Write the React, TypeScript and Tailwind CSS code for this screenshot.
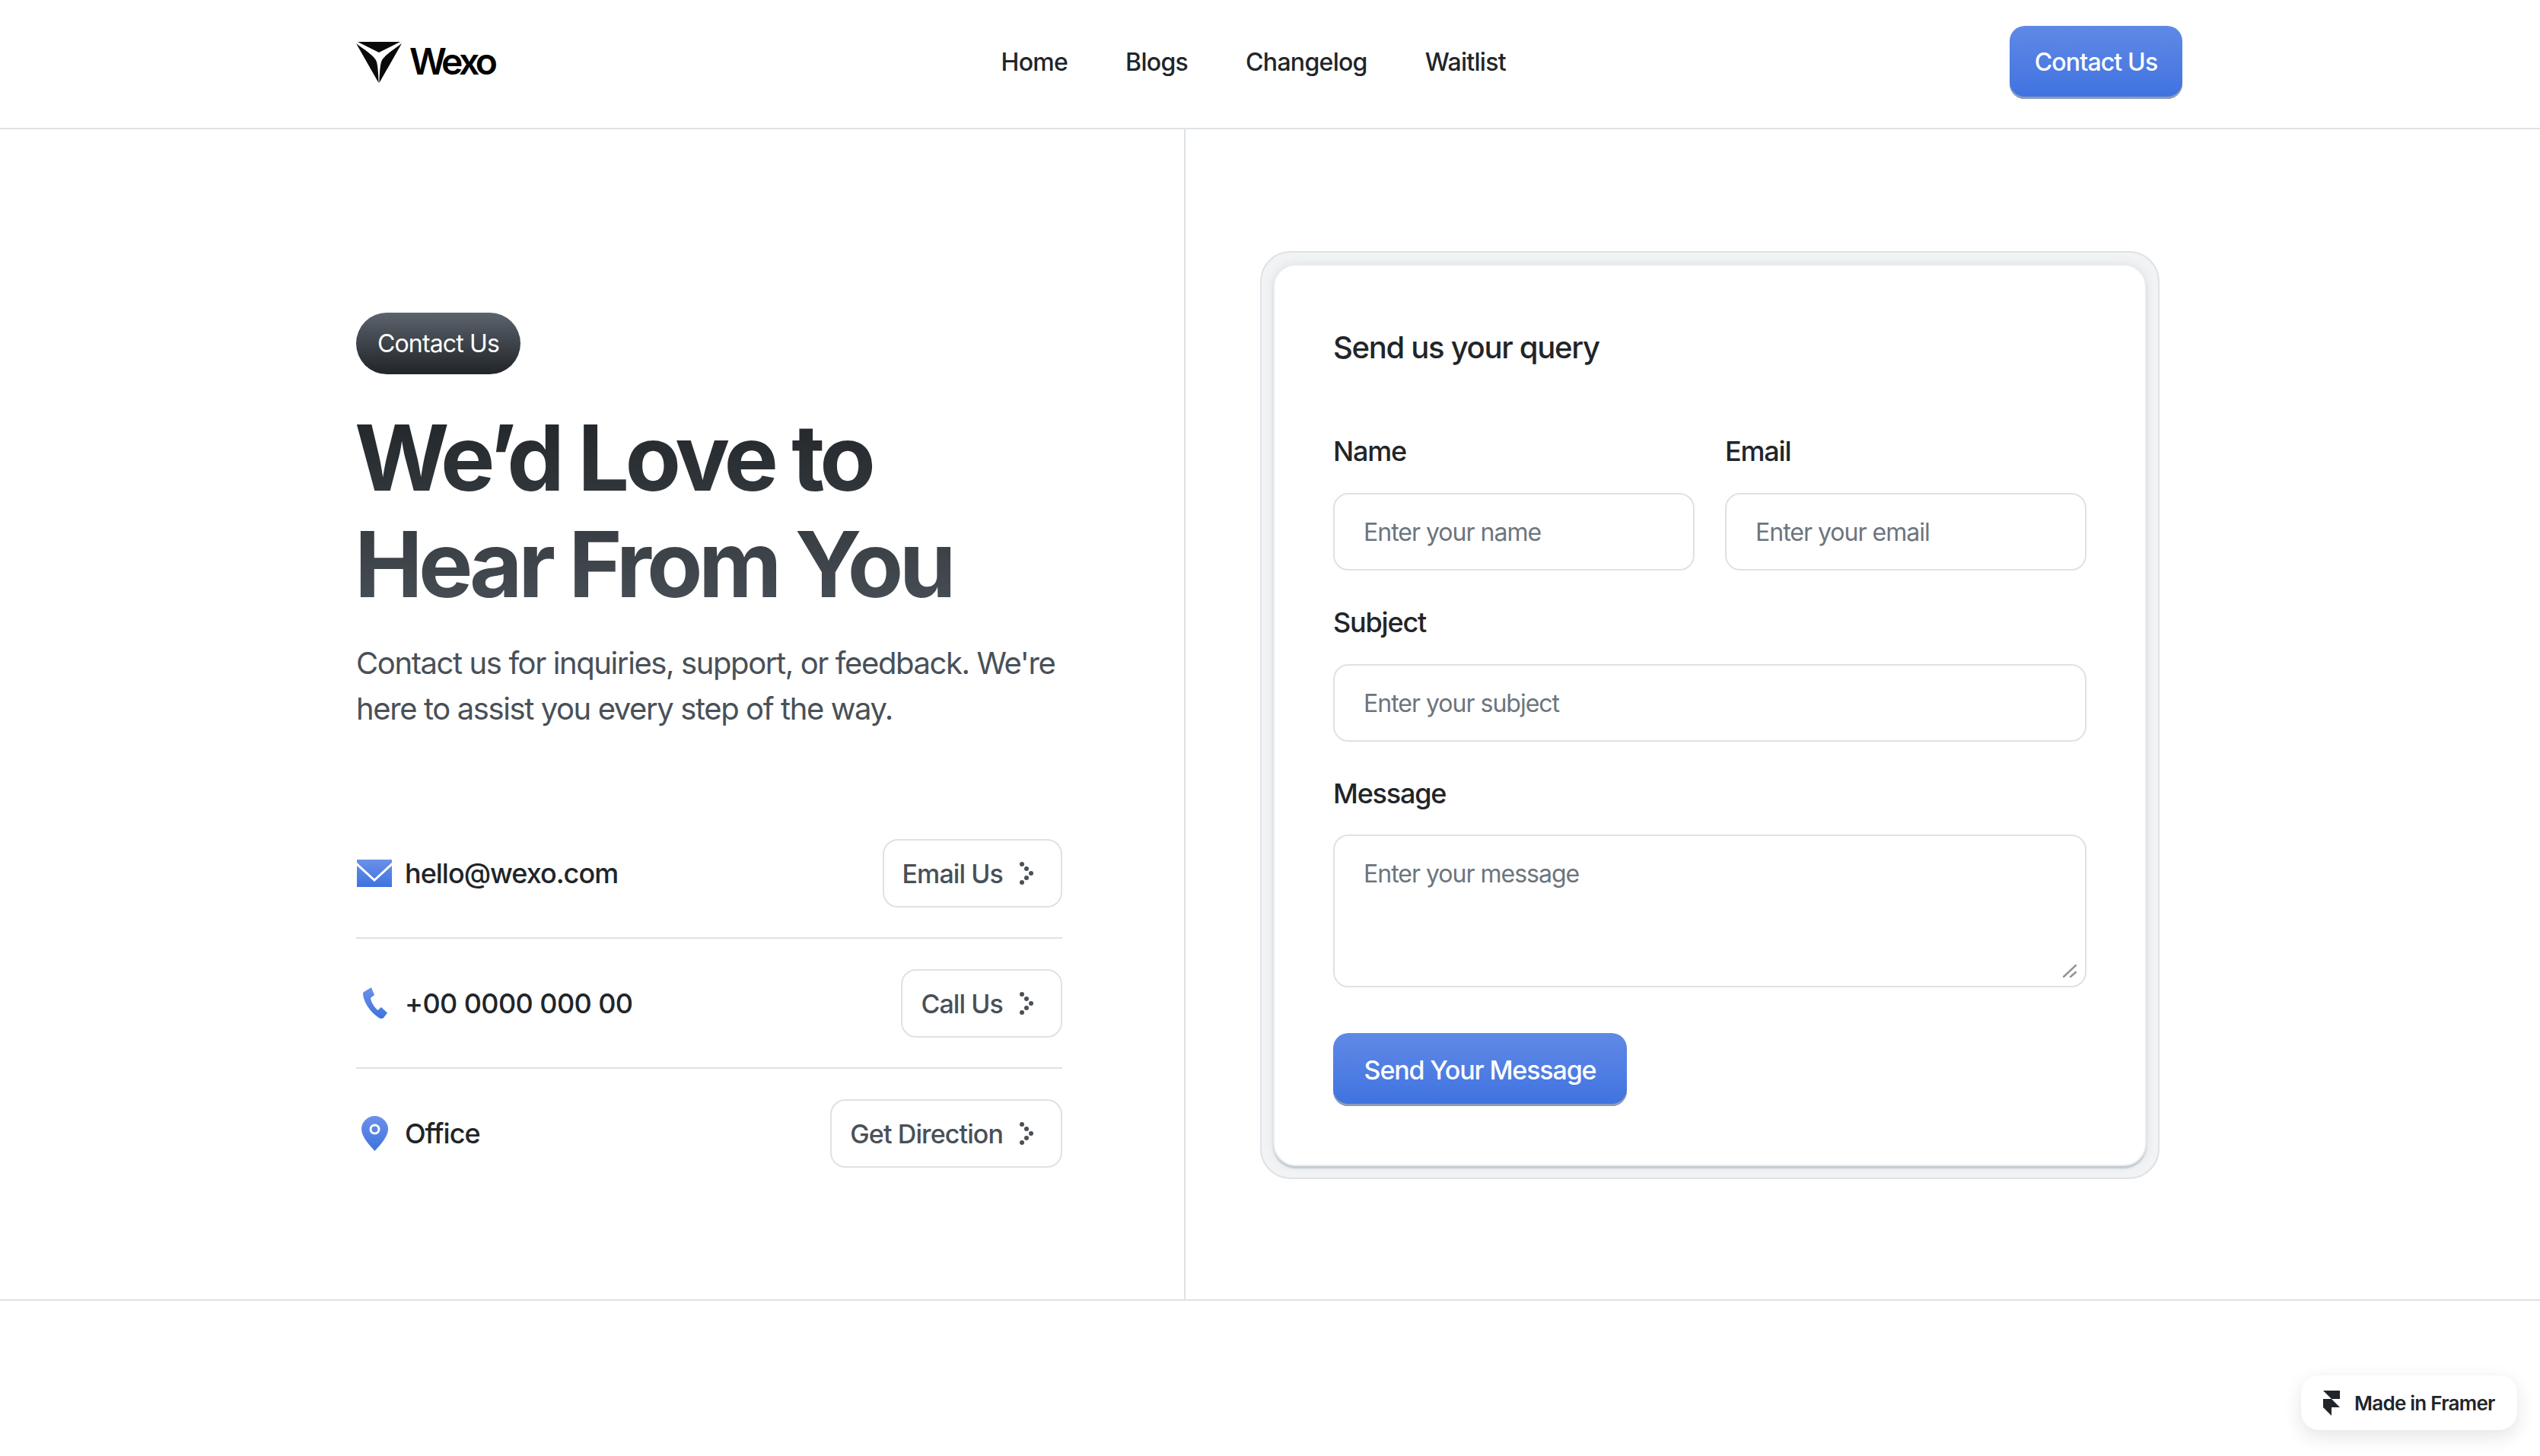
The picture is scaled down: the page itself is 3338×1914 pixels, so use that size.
import * as React from "react";

const navLinks = ["Home", "Blogs", "Changelog", "Waitlist"];

const BlueGradient = ({ id }: { id: string }) => (
  <defs>
    <linearGradient id={id} x1="0" y1="0" x2="0" y2="1">
      <stop offset="0" stopColor="#6b91e8" />
      <stop offset="1" stopColor="#3f72e0" />
    </linearGradient>
  </defs>
);

const WexoLogo = () => (
  <svg width="60" height="54" viewBox="0 0 60 54" className="shrink-0">
    <path d="M2 0H58L30 14Z" fill="#0a0a0a" />
    <path d="M0 2C10 10 21 16 26 24C28 28 29 36 29.6 54Z" fill="#0a0a0a" />
    <path d="M60 2C50 10 39 16 34 24C32 28 31 36 30.4 54Z" fill="#0a0a0a" />
  </svg>
);

const MailIcon = () => (
  <svg width="46" height="36" viewBox="0 0 46 36">
    <BlueGradient id="mail" />
    <rect width="46" height="36" fill="url(#mail)" />
    <path d="M-1 5L23 27L47 5" fill="none" stroke="#fff" strokeWidth="3" />
  </svg>
);

const PhoneIcon = () => (
  <svg width="32" height="42" viewBox="0 0 32 42" className="ml-[2px]">
    <BlueGradient id="phone" />
    <path
      d="M1 6L11 0L15 10L10 14C11 20 15 26 19.5 30L24 26L32 33.5L27 40C26 41 23 41.5 21 40C10 33 1 20 0 9C0 8 0 7 1 6Z"
      fill="url(#phone)"
    />
  </svg>
);

const PinIcon = () => (
  <svg width="35" height="46" viewBox="0 0 35 46">
    <BlueGradient id="pin" />
    <path
      d="M17.5 0C8 0 0 8 0 17C0 27 10 38 17.5 46C25 38 35 27 35 17C35 8 27 0 17.5 0Z"
      fill="url(#pin)"
    />
    <circle cx="17.5" cy="17.5" r="5.5" fill="none" stroke="#fff" strokeWidth="3" />
  </svg>
);

const DotsArrow = () => (
  <svg width="40" height="40" viewBox="0 0 40 40" fill="#495057">
    <circle cx="13" cy="8" r="3" />
    <circle cx="19" cy="14" r="3" />
    <circle cx="25" cy="20" r="3" />
    <circle cx="19" cy="26" r="3" />
    <circle cx="13" cy="32" r="3" />
  </svg>
);

const contactRows = [
  { icon: <MailIcon />, text: "hello@wexo.com", action: "Email Us", tracking: "tracking-[-1px]" },
  { icon: <PhoneIcon />, text: "+00 0000 000 00", action: "Call Us", tracking: "tracking-[-0.6px]" },
  { icon: <PinIcon />, text: "Office", action: "Get Direction", tracking: "tracking-[-1px]" },
];

const inputClass =
  "w-full rounded-[20px] border-2 border-[#dee2e6] bg-white px-[38px] text-[32px] tracking-[-1px] text-[#212529] outline-none placeholder:text-[#6c757d]";

const Field = ({ label, placeholder }: { label: string; placeholder: string }) => (
  <label className="flex min-w-0 flex-1 flex-col gap-[27px]">
    <span className="text-[36px] leading-[56px] font-medium tracking-[-1.2px] text-[#212529]">{label}</span>
    <input placeholder={placeholder} className={`${inputClass} h-[102px]`} />
  </label>
);

export default function App() {
  return (
    <div className="relative min-h-[1914px] bg-white font-[Inter,sans-serif]">
      <header className="h-[170px] border-b-2 border-[#dee2e6]">
        <div className="mx-auto flex h-[168px] w-[2402px] items-center justify-between pr-[2px] pb-[4px]">
          <div className="flex items-center gap-[10px]">
            <WexoLogo />
            <span className="mb-[2px] text-[48px] leading-none font-semibold tracking-[-4.5px] text-black">Wexo</span>
          </div>
          <nav className="ml-[4px] flex items-center gap-[76px]">
            {navLinks.map((link) => (
              <a key={link} className="text-[32px] font-medium tracking-[-0.7px] text-[#212529]">
                {link}
              </a>
            ))}
          </nav>
          <a className="flex h-[96px] w-[227px] items-center justify-center rounded-[20px] bg-linear-to-b from-[#6089e6] to-[#3f72e0] text-[32px] font-medium tracking-[-0.85px] text-white shadow-[inset_0_-3px_0_#8c9cb8]">
            Contact Us
          </a>
        </div>
      </header>

      <main className="flex border-b-2 border-[#dee2e6]">
        <section className="w-[1558px] border-r-2 border-[#dee2e6] pt-[241px] pr-[160px] pb-[170px] pl-[468px]">
          <span className="inline-flex h-[81px] w-[216px] items-center justify-center rounded-full bg-linear-to-b from-[#5c646d] to-[#212529] text-[32px] tracking-[-0.85px] text-white">
            Contact Us
          </span>
          <h1 className="mt-[40px] ml-[-2px] w-fit bg-linear-to-b from-[#212529] to-[#495057] bg-clip-text text-[120px] leading-[140px] font-bold tracking-[-5.6px] text-transparent">
            We’d Love to
            <br />
            Hear From You
          </h1>
          <p className="mt-[30px] text-[40px] leading-[60px] tracking-[-1.4px] text-[#495057]">
            Contact us for inquiries, support, or feedback. We're here to assist you every step of the way.
          </p>
          <ul className="mt-[141px] flex flex-col">
            {contactRows.map((row, i) => (
              <li
                key={row.text}
                className={`flex items-center justify-between ${i < 2 ? "border-b-2 border-[#dee2e6] pb-[39px]" : ""} ${i > 0 ? "pt-[40px]" : ""}`}
              >
                <div className="flex items-center gap-4">
                  <div className="flex w-[48px] justify-center">{row.icon}</div>
                  <span className={`text-[36px] font-medium text-[#212529] ${row.tracking}`}>{row.text}</span>
                </div>
                <a className="flex h-[90px] items-center gap-[12px] rounded-[20px] border-2 border-[#dee2e6] pr-[24px] pl-[24px] text-[34px] font-medium tracking-[-0.9px] text-[#495057]">
                  {row.action}
                  <DotsArrow />
                </a>
              </li>
            ))}
          </ul>
        </section>

        <section className="pt-[160px] pb-[158px] pl-[98px]">
          <div className="w-[1182px] rounded-[40px] border-2 border-[#dee2e6] bg-[#f1f3f5] p-[15px]">
            <form className="flex flex-col rounded-[30px] border-2 border-[#e9ecef] bg-white px-[77px] pt-[78px] pb-[77px] shadow-[0_3px_2px_#c3c8ce,0_0_12px_#dee2e6]">
              <h2 className="text-[40px] leading-[60px] font-medium tracking-[-1.3px] text-[#212529]">
                Send us your query
              </h2>
              <div className="mt-[78px] flex gap-[40px]">
                <Field label="Name" placeholder="Enter your name" />
                <Field label="Email" placeholder="Enter your email" />
              </div>
              <div className="mt-[40px] flex">
                <Field label="Subject" placeholder="Enter your subject" />
              </div>
              <label className="relative mt-[40px] flex flex-col gap-[26px]">
                <span className="text-[36px] leading-[56px] font-medium tracking-[-1.2px] text-[#212529]">Message</span>
                <textarea
                  placeholder="Enter your message"
                  className={`${inputClass} h-[201px] resize-none py-[30px] leading-[40px]`}
                />
                <svg
                  width="18"
                  height="18"
                  viewBox="0 0 18 18"
                  className="absolute right-[13px] bottom-[13px]"
                  stroke="#8f9499"
                  strokeWidth="2.5"
                  strokeLinecap="round"
                >
                  <path d="M1 17L17 2M10 17L17 11" />
                </svg>
              </label>
              <button
                type="button"
                className="mt-[60px] flex h-[96px] w-[386px] items-center justify-center rounded-[20px] bg-linear-to-b from-[#6089e6] to-[#3f72e0] text-[34px] font-medium tracking-[-1.15px] text-white shadow-[inset_0_-3px_0_#8c9cb8]"
              >
                Send Your Message
              </button>
            </form>
          </div>
        </section>
      </main>

      <a className="absolute top-[1808px] left-[3024px] flex h-[72px] w-[284px] items-center gap-[19px] rounded-[24px] bg-white pl-[29px] text-[26px] font-semibold tracking-[-0.75px] text-[#212529] shadow-[0_8px_24px_rgba(33,37,41,0.12)]">
        <svg width="22" height="33" viewBox="0 0 22 33" fill="#212529">
          <path d="M0 0H22V11H11Z" />
          <path d="M0 11H11L22 22H11V33L0 22Z" />
        </svg>
        Made in Framer
      </a>
    </div>
  );
}
